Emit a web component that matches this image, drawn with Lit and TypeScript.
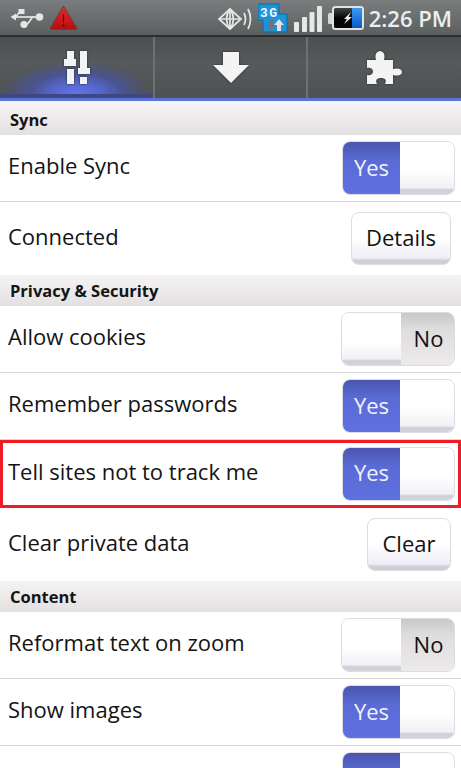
import { LitElement, css, html, svg } from 'lit';
import { customElement, property } from 'lit/decorators.js';

// status icons share the bar's height, so y in each viewBox is the page y
const usbIcon = svg`
  <svg class="icon" width="34" height="34" viewBox="10 0 34 34">
    <g fill="#e4e6e6">
      <path d="M10.5 16 L16 12.5 V19.5 Z"/>
      <circle cx="39.5" cy="16" r="3.8"/>
      <rect x="18.5" y="8" width="6" height="5"/>
      <circle cx="24" cy="23.5" r="3.6"/>
    </g>
    <g fill="none" stroke="#e4e6e6" stroke-width="1.7">
      <path d="M15 16 H37"/>
      <path d="M15.5 16 L20 10.5 H23"/>
      <path d="M26 23.5 C30 23 30 16 34 16"/>
    </g>
  </svg>`;

const warningIcon = svg`
  <svg class="icon" width="28" height="34" viewBox="50 0 28 34">
    <defs>
      <linearGradient id="warn" x1="0" y1="0" x2="0" y2="1">
        <stop offset="0" stop-color="#f2272a"/>
        <stop offset="1" stop-color="#b30f12"/>
      </linearGradient>
    </defs>
    <path d="M63.5 5 L76.5 26.5 Q77 28.5 75.5 28.5 H51.5 Q50 28.5 50.5 26.5 Z" fill="url(#warn)" stroke="#5d4444"/>
    <path d="M62.8 13 H64.2 L63.9 22 H63.1 Z" fill="#5e0608"/>
    <circle cx="63.5" cy="24.5" r="1.1" fill="#5e0608"/>
  </svg>`;

const gpsIcon = svg`
  <svg class="icon" width="35" height="34" viewBox="217 0 35 34">
    <g fill="none" stroke="#e6e8e8" stroke-width="1.7">
      <path d="M229 8 L240 18 L229 28 L218 18 Z"/>
      <path d="M218 18 H240 M229 8 V28"/>
      <path d="M229 8 Q222 18 229 28 M229 8 Q236 18 229 28"/>
      <path d="M243 12 Q246 18 243 24"/>
      <path d="M247 8 Q252 18 247 28"/>
    </g>
  </svg>`;

const networkIcon = svg`
  <svg class="icon" width="31" height="34" viewBox="257 0 31 34">
    <path d="M257 3 H278 V13 H286 V31 H262 V19 H257 Z" fill="#1c93d8" stroke="#0e6aa2"/>
    <text x="259" y="16" font-family="'Liberation Mono', monospace" font-size="13" font-weight="700" fill="#eef6fb" textLength="17">3G</text>
    <path d="M268 19 H272 V24 H275 L270 30 L265 24 H268 Z" fill="#6e7478"/>
    <path d="M276 30 H280 V24 H283 L278 18 L273 24 H276 Z" fill="#dfe3e5"/>
  </svg>`;

const signalIcon = svg`
  <svg class="icon" width="29" height="34" viewBox="293 0 29 34">
    <g fill="#e6e8e8">
      <rect x="293" y="21" width="5" height="10" rx="1"/>
      <rect x="301" y="16" width="5" height="15" rx="1"/>
      <rect x="308.500" y="11" width="5" height="20" rx="1"/>
      <rect x="316" y="5" width="5" height="26" rx="1"/>
    </g>
  </svg>`;

const batteryIcon = svg`
  <svg class="icon" width="36" height="34" viewBox="326 0 36 34">
    <defs>
      <linearGradient id="cell" x1="0" y1="0" x2="0" y2="1">
        <stop offset="0" stop-color="#4a4c4c"/>
        <stop offset="0.5" stop-color="#050505"/>
      </linearGradient>
      <linearGradient id="charge" x1="0" y1="0" x2="0" y2="1">
        <stop offset="0" stop-color="#3a9cf0"/>
        <stop offset="1" stop-color="#0a58c8"/>
      </linearGradient>
    </defs>
    <rect x="326" y="12" width="5" height="11" rx="1.500" fill="#d8dada"/>
    <rect x="331" y="6" width="30" height="22" rx="2.500" fill="url(#cell)" stroke="#e2e4e4" stroke-width="2"/>
    <rect x="350" y="7" width="10" height="20" fill="url(#charge)"/>
    <path d="M349 11 L342 18 H345 L342 23 L350 16 H346.500 Z" fill="#f2f2f2"/>
  </svg>`;

const slidersIcon = svg`
  <svg class="tab-icon" width="28" height="34" viewBox="0 0 28 34">
    <g fill="#f2f3f5">
      <rect x="4" y="0" width="7" height="8"/>
      <rect x="1" y="8" width="12" height="7"/>
      <rect x="4" y="18" width="7" height="15"/>
      <rect x="17" y="0" width="7" height="17"/>
      <rect x="15" y="17" width="12" height="6"/>
      <rect x="17" y="26" width="7" height="7"/>
    </g>
  </svg>`;

const downloadIcon = svg`
  <svg class="tab-icon" width="36" height="32" viewBox="0 0 36 32">
    <path d="M10 0 H26 V13 H36 L18 31 L0 13 H10 Z" fill="#f4f4f4"/>
  </svg>`;

const puzzleIcon = svg`
  <svg class="tab-icon" width="35" height="33" viewBox="0 0 35 33">
    <path d="M0 9 H9 C8 5 8 1 13 0 C18 1 18 5 17 9 H26 V18 C29 17 35 17 35 21 C35 25 29 25 26 24 V33 H18 C20 29 18 27 14 27 C10 27 8 29 10 33 H0 V24 C3 25 6 23 6 20.500 C6 18 3 16 0 17 Z" fill="#f4f4f4"/>
  </svg>`;

@customElement('app-switch')
export class AppSwitch extends LitElement {
  @property({ type: Boolean, reflect: true }) on = false;

  static styles = css`
    :host {
      border: 1px solid #dcdce4;
      border-radius: 8px;
      box-sizing: border-box;
      display: grid;
      grid-template-columns: 59px 1fr;
      height: 54px;
      overflow: hidden;
      width: 114px;
    }

    :host([on]) {
      grid-template-columns: 57px 1fr;
      width: 113px;
    }

    .plain {
      background: linear-gradient(#fff 55%, #f1f1f6 88%, #cfcfd7 92%, #d4d4db);
    }

    .yes,
    .no {
      align-items: center;
      display: flex;
      font-size: 22px;
      justify-content: center;
      padding-bottom: 3px;
    }

    .yes {
      background: linear-gradient(#4a55ad, #5a6bd6 35%, #5f71de);
      color: #f2f3fb;
    }

    .no {
      background: linear-gradient(#c8c8c8, #dedcdc 30%, #eceaea);
      color: #111;
      padding-left: 2px;
    }
  `;

  render() {
    return this.on
      ? html`<div class="yes">Yes</div><div class="plain"></div>`
      : html`<div class="plain"></div><div class="no">No</div>`;
  }
}

@customElement('app-root')
export class AppRoot extends LitElement {
  static styles = css`
    :host {
      background: #fff;
      color: #141414;
      display: block;
      font-family: 'Open Sans', 'Noto Sans', sans-serif;
      height: 768px;
      overflow: hidden;
    }

    .status {
      align-items: center;
      background: linear-gradient(#797d7d, #5b5f5f);
      border-bottom: 2px solid #2b2e2e;
      display: flex;
      height: 35px;
      padding: 0 9px 0 10px;
    }

    .icon {
      display: block;
      flex: none;
    }

    .usb {
      margin-right: 6px;
    }

    .spacer {
      flex: 1;
    }

    .status-right {
      align-items: center;
      display: flex;
      gap: 5px;
    }

    .clock {
      color: #eceeee;
      font-size: 22px;
      font-weight: 600;
      line-height: 34px;
      white-space: nowrap;
    }

    .tabs {
      background: linear-gradient(#4c5050, #565a5a 45%, #4d5151);
      border-bottom: 3px solid #5e72dc;
      display: grid;
      grid-template-columns: 155px 153px 1fr;
      height: 61px;
    }

    .tab {
      align-items: center;
      border-right: 2px solid #6d7171;
      display: flex;
      justify-content: center;
    }

    .tab:last-child {
      border-right: 0;
    }

    .tab.active {
      background:
        linear-gradient(transparent 57px, #3f4780 57px),
        radial-gradient(ellipse 74px 32px at 50% 92%, #6074ea 0%, #5668d0 30%, #4a5490 62%, rgba(76, 82, 90, 0) 100%);
    }

    .tab-icon {
      display: block;
      filter: drop-shadow(0 0 1px #26282c);
    }

    .gap {
      background: #f6f4f4;
      height: 3px;
    }

    .section {
      align-items: center;
      background: linear-gradient(#f5f3f3, #e2e0e0);
      display: flex;
      font-size: 16.5px;
      font-weight: 700;
      height: 31px;
      padding-left: 10px;
    }

    .row {
      align-items: center;
      background: #fff;
      border-bottom: 1px solid #d8d8d8;
      box-sizing: border-box;
      display: flex;
      font-size: 22px;
      height: 67px;
      justify-content: space-between;
      padding: 0 6px 0 8px;
    }

    .row.tall {
      border-bottom: 0;
      height: 73px;
    }

    .row.flagged {
      height: 68px;
      outline: 3px solid #ee1c25;
      outline-offset: -3px;
    }

    .label {
      margin-bottom: 6px;
    }

    .button {
      align-items: center;
      background: linear-gradient(#fff 50%, #eeeef6 88%, #cfcfd7 93%);
      border: 1px solid #dcdce4;
      border-radius: 8px;
      box-sizing: border-box;
      color: #111;
      display: flex;
      font-size: 22px;
      height: 53px;
      justify-content: center;
      margin-right: 4px;
      padding-bottom: 3px;
    }

    .details {
      width: 100px;
    }

    .clear {
      width: 84px;
    }
  `;

  render() {
    return html`
      <div class="status">
        <span class="usb">${usbIcon}</span>
        ${warningIcon}
        <span class="spacer"></span>
        <div class="status-right">
          ${gpsIcon} ${networkIcon} ${signalIcon} ${batteryIcon}
          <span class="clock">2:26 PM</span>
        </div>
      </div>
      <div class="tabs">
        <div class="tab active">${slidersIcon}</div>
        <div class="tab">${downloadIcon}</div>
        <div class="tab">${puzzleIcon}</div>
      </div>
      <div class="gap"></div>
      <div class="section">Sync</div>
      <div class="row"><span class="label">Enable Sync</span><app-switch on></app-switch></div>
      <div class="row tall"><span class="label">Connected</span><div class="button details">Details</div></div>
      <div class="section">Privacy &amp; Security</div>
      <div class="row"><span class="label">Allow cookies</span><app-switch></app-switch></div>
      <div class="row"><span class="label">Remember passwords</span><app-switch on></app-switch></div>
      <div class="row flagged"><span class="label">Tell sites not to track me</span><app-switch on></app-switch></div>
      <div class="row tall"><span class="label">Clear private data</span><div class="button clear">Clear</div></div>
      <div class="section">Content</div>
      <div class="row"><span class="label">Reformat text on zoom</span><app-switch></app-switch></div>
      <div class="row"><span class="label">Show images</span><app-switch on></app-switch></div>
      <div class="row"><span></span><app-switch on></app-switch></div>
    `;
  }
}

declare global {
  interface HTMLElementTagNameMap {
    'app-root': AppRoot;
    'app-switch': AppSwitch;
  }
}
